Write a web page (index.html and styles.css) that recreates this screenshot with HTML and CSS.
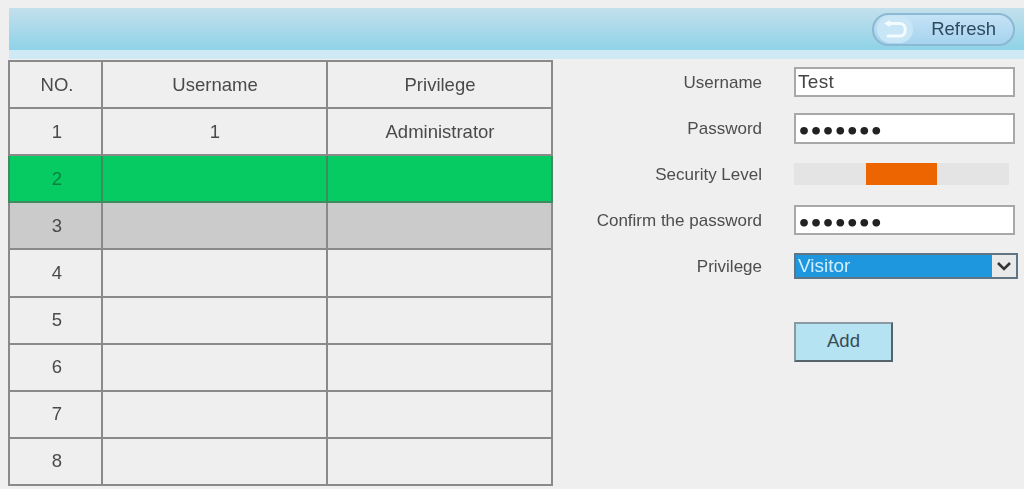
FILE: index.html
```html
<!DOCTYPE html>
<html lang="en">
<head>
<meta charset="utf-8">
<title>Users</title>
<link rel="stylesheet" href="styles.css">
</head>
<body>
<div class="page">
  <header class="toolbar">
    <button class="refresh" type="button">
      <span class="refresh-glow">
        <svg class="refresh-icon" viewBox="0 0 30 24" width="30" height="24" aria-hidden="true">
          <path d="M9 6.5 H20 C27 6.5 27 19 20 19 H8" fill="none" stroke="#f4fbff" stroke-width="3" stroke-linecap="round"/>
          <path d="M10 3 L4 6.5 L10 10 Z" fill="#f4fbff"/>
        </svg>
      </span>
      <span class="refresh-text">Refresh</span>
    </button>
  </header>
  <main class="content">
    <table class="users">
      <colgroup><col class="c1"><col class="c2"><col class="c3"></colgroup>
      <thead>
        <tr><th>NO.</th><th>Username</th><th>Privilege</th></tr>
      </thead>
      <tbody>
        <tr><td>1</td><td>1</td><td>Administrator</td></tr>
        <tr class="selected"><td>2</td><td></td><td></td></tr>
        <tr class="hover"><td>3</td><td></td><td></td></tr>
        <tr><td>4</td><td></td><td></td></tr>
        <tr><td>5</td><td></td><td></td></tr>
        <tr><td>6</td><td></td><td></td></tr>
        <tr><td>7</td><td></td><td></td></tr>
        <tr><td>8</td><td></td><td></td></tr>
      </tbody>
    </table>
    <form class="form">
      <label class="lbl">Username</label>
      <div class="field f30">Test</div>
      <label class="lbl">Password</label>
      <div class="field dots f31">•••••••</div>
      <label class="lbl">Security Level</label>
      <div class="meter"><div class="seg"></div></div>
      <label class="lbl">Confirm the password</label>
      <div class="field dots f30">•••••••</div>
      <label class="lbl">Privilege</label>
      <div class="select">
        <span class="select-value">Visitor</span>
        <span class="select-arrow">
          <svg viewBox="0 0 16 10" width="16" height="10" aria-hidden="true"><path d="M2 2 L8 8 L14 2" fill="none" stroke="#333" stroke-width="2.6"/></svg>
        </span>
      </div>
      <div class="add-cell"><button class="add" type="button">Add</button></div>
    </form>
  </main>
</div>
</body>
</html>
```
FILE: styles.css
```css
* { box-sizing: border-box; }
html, body { margin: 0; height: 100%; }
body {
  background: #efefef;
  font-family: "Liberation Sans", Arial, sans-serif;
  color: #4a4a4a;
  overflow: hidden;
}
.page { padding: 8px 0 0 8px; width: 1024px; height: 489px; filter: blur(0.55px); }
.toolbar {
  height: 42px;
  width: 1015px;
  margin-left: 1px;
  background: linear-gradient(#c3e0ec, #8fd2e8);
  box-shadow: 0 9px 0 #cfeaf4;
  display: flex;
  justify-content: flex-end;
  align-items: center;
  padding: 0 9px 0 0;
}
.refresh {
  width: 143px;
  height: 33px;
  border: 2px solid #8bb8d2;
  border-radius: 17px;
  background: linear-gradient(#c4e3f6, #a6d3ee);
  display: flex;
  align-items: center;
  padding: 0 17px 0 3px;
  font: 18.5px "Liberation Sans", Arial, sans-serif;
  color: #2f4a5e;
}
.refresh-glow {
  width: 36px;
  height: 27px;
  border-radius: 14px;
  background: #c9e6f7;
  display: flex;
  align-items: center;
  justify-content: center;
  flex: none;
}
.refresh-text { margin-left: auto; }
.content { display: flex; margin-top: 10px; }
.users {
  border-collapse: collapse;
  table-layout: fixed;
  width: 543px;
  height: 426px;
  font-size: 18.5px;
  text-align: center;
  flex: none;
  align-self: flex-start;
}
.c1 { width: 93px; }
.c2 { width: 225px; }
.c3 { width: 225px; }
.users th, .users td {
  border: 2px solid #8a8a8a;
  padding: 0 0 0 1px;
  font-weight: normal;
  height: 47px;
}
.users th:first-child, .users td:first-child { padding-left: 3px; }
.selected td { background: #05cb62; color: #0b8040; border-color: #3f8a60; }
.hover td { background: #cbcbcb; }
.form {
  display: grid;
  grid-template-columns: 209px 221px;
  grid-auto-rows: 46px;
  column-gap: 32px;
  align-items: center;
  align-self: flex-start;
  margin-top: -1px;
  font-size: 17px;
}
.lbl { text-align: right; color: #4d4d4d; padding-top: 2px; }
.field {
  background: #fff;
  border: 2px solid #a8a8a8;
  padding: 0 2px;
  font-size: 19px;
  letter-spacing: 0.3px;
  color: #444;
  display: flex;
  align-items: center;
}
.f30 { height: 30px; }
.f31 { height: 31px; }
.dots {
  color: #222;
  font-family: "DejaVu Sans", sans-serif;
  font-size: 22px;
  line-height: 22px;
  letter-spacing: -2px;
  font-weight: bold;
  padding: 7px 0 0 1px;
  overflow: hidden;
}
.meter {
  width: 215px;
  height: 22px;
  background: #e4e4e4;
  display: flex;
  justify-content: center;
}
.seg { width: 71px; height: 100%; background: #ed6500; }
.select {
  height: 26px;
  width: 224px;
  margin-top: -1px;
  border: 2px solid #5f7484;
  background: #1f97de;
  display: flex;
  color: #cfeeff;
  font-size: 19px;
}
.select-value { flex: 1; padding-left: 2px; line-height: 22px; }
.select-arrow {
  width: 24px;
  background: #e9e9e9;
  display: flex;
  align-items: center;
  justify-content: center;
}
.add-cell { grid-column: 2; align-self: start; margin-top: 33px; }
.add {
  display: block;
  width: 99px;
  height: 40px;
  background: #b6e3f2;
  border: 2px solid #8a9aa3;
  border-right-color: #55636b;
  border-bottom-color: #55636b;
  font: 18.5px "Liberation Sans", Arial, sans-serif;
  color: #3a4b55;
  padding: 0 0 2px;
}
```
